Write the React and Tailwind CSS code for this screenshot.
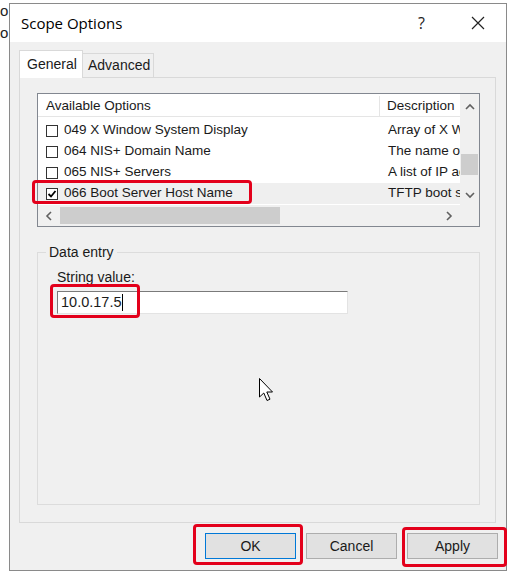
import React from 'react';

const rows = [
  { code: '049 X Window System Display', desc: 'Array of X Window System display managers', checked: false },
  { code: '064 NIS+ Domain Name', desc: 'The name of the client\'s NIS+ domain', checked: false },
  { code: '065 NIS+ Servers', desc: 'A list of IP addresses indicating NIS+ servers', checked: false },
  { code: '066 Boot Server Host Name', desc: 'TFTP boot server host name', checked: true },
];

function Checkbox({ checked }) {
  return (
    <div className="w-[12px] h-[12px] border border-[#333] bg-white flex items-center justify-center shrink-0">
      {checked && (
        <svg width="10" height="10" viewBox="0 0 10 10">
          <path d="M1.5 5 L4 7.5 L8.5 2" fill="none" stroke="#000" strokeWidth="1.8" />
        </svg>
      )}
    </div>
  );
}

function Chevron({ dir }) {
  const d = {
    up: 'M1 6 L5 2 L9 6',
    down: 'M1 2 L5 6 L9 2',
    left: 'M6 1 L2 5 L6 9',
    right: 'M2 1 L6 5 L2 9',
  }[dir];
  const vertical = dir === 'up' || dir === 'down';
  return (
    <svg width={vertical ? 10 : 8} height={vertical ? 8 : 10} viewBox={vertical ? '0 0 10 8' : '0 0 8 10'}>
      <path d={d} fill="none" stroke="#606060" strokeWidth="1.6" />
    </svg>
  );
}

function Button({ label, primary }) {
  return (
    <div
      className={`w-[91px] h-[26px] flex items-center justify-center bg-[#e1e1e1] text-[14px] text-[#1a1a1a] ${
        primary ? 'border border-[#0078d7]' : 'border border-[#adadad]'
      }`}
    >
      {label}
    </div>
  );
}

export default function App() {
  return (
    <div className="relative w-[524px] h-[580px] bg-white overflow-hidden flex font-['Liberation_Sans',Arial,sans-serif] text-[#1a1a1a]">
      {/* window behind, mostly hidden */}
      <div className="w-[9px] overflow-hidden shrink-0 text-[15px] leading-[22px] text-[#222]">
        <div className="w-[9px] overflow-hidden whitespace-nowrap">o</div>
        <div className="w-[9px] overflow-hidden whitespace-nowrap">o</div>
      </div>

      {/* dialog */}
      <div className="mt-[3px] w-[498px] h-[568px] border border-[#8a8a8a] bg-[#f0f0f0] flex flex-col shrink-0">
        {/* title bar */}
        <div className="h-[38px] bg-white flex items-center pl-[11px] shrink-0">
          <span className="text-[15px] font-['Open_Sans',sans-serif] text-[#000]">Scope Options</span>
          <span className="ml-auto text-[16px] font-['Open_Sans',sans-serif] text-[#222] mr-[46px]">?</span>
          <svg width="14" height="14" viewBox="0 0 14 14" className="mr-[21px]">
            <path d="M1 1 L13 13 M13 1 L1 13" stroke="#222" strokeWidth="1.2" />
          </svg>
        </div>

        {/* body */}
        <div className="flex flex-col pl-[9px] pr-[10px] pt-[8px]">
          {/* tabs */}
          <div className="flex items-end h-[28px] relative z-10 -mb-[1px]">
            <div className="w-[64px] h-[28px] bg-white border border-[#d9d9d9] border-b-0 flex items-center pl-[7px] text-[14px]">
              General
            </div>
            <div className="w-[71px] h-[25px] bg-[#f0f0f0] border border-[#d9d9d9] border-l-0 flex items-center pl-[5px] text-[14px]">
              Advanced
            </div>
          </div>

          {/* panel */}
          <div className="h-[446px] border border-[#d9d9d9] bg-[#f0f0f0] flex flex-col pl-[17px] pr-[15px] pt-[15px]">
            {/* list view */}
            <div className="w-[443px] h-[134px] border border-[#828790] bg-white flex flex-col shrink-0">
              <div className="flex h-[111px]">
                <div className="flex-1 flex flex-col overflow-hidden">
                  <div className="flex h-[23px] border-b border-[#e5e5e5] text-[13.5px] shrink-0 pt-[2px]">
                    <div className="w-[342px] border-r border-[#e5e5e5] pl-[8px] flex items-center">Available Options</div>
                    <div className="flex-1 min-w-0 pl-[7px] flex items-center whitespace-nowrap overflow-hidden">Description</div>
                  </div>
                  <div className="flex flex-col pt-[3px]">
                    {rows.map((r) => (
                      <div
                        key={r.code}
                        className={`flex h-[21px] items-center text-[13.5px] whitespace-nowrap ${r.checked ? 'bg-[#efefef]' : ''}`}
                      >
                        <div className="w-[342px] flex items-center pl-[8px] gap-[6px] shrink-0">
                          <Checkbox checked={r.checked} />
                          <span>{r.code}</span>
                        </div>
                        <div className="flex-1 min-w-0 pl-[8px] overflow-hidden">{r.desc}</div>
                      </div>
                    ))}
                  </div>
                </div>
                {/* vertical scrollbar */}
                <div className="w-[19px] bg-[#f0f0f0] flex flex-col items-center shrink-0">
                  <div className="h-[22px] flex items-center justify-center pt-[4px]">
                    <Chevron dir="up" />
                  </div>
                  <div className="h-[38px]" />
                  <div className="w-[17px] h-[21px] bg-[#cdcdcd]" />
                  <div className="flex-1 flex items-end pb-[6px]">
                    <Chevron dir="down" />
                  </div>
                </div>
              </div>
              {/* horizontal scrollbar */}
              <div className="flex h-[21px] shrink-0">
                <div className="flex-1 bg-[#f0f0f0] flex items-center">
                  <div className="w-[22px] flex items-center justify-center">
                    <Chevron dir="left" />
                  </div>
                  <div className="w-[220px] h-[17px] bg-[#cdcdcd]" />
                  <div className="flex-1" />
                  <div className="w-[22px] flex items-center justify-center">
                    <Chevron dir="right" />
                  </div>
                </div>
                <div className="w-[19px] bg-[#f0f0f0]" />
              </div>
            </div>

            {/* group box */}
            <div className="mt-[25px] w-[443px] h-[253px] border border-[#dcdcdc] relative flex flex-col pl-[19px]">
              <span className="absolute -top-[10px] left-[8px] bg-[#f0f0f0] px-[3px] text-[14px] leading-[18px]">Data entry</span>
              <div className="mt-[15px] text-[14px] leading-[18px]">String value:</div>
              <div className="mt-[5px] w-[291px] h-[23px] bg-white border border-[#7a7a7a] border-b-[#e3e3e3] border-r-[#e3e3e3] flex items-center pl-[3px] text-[14.5px]">
                <span>10.0.17.5</span>
                <span className="w-[1px] h-[17px] bg-black ml-[1px]" />
              </div>
              <div className="flex-1 flex items-start justify-center pt-[64px] pl-[0px] pr-[2px]">
                <svg width="16" height="24" viewBox="0 0 16 24">
                  <path
                    d="M0.5 0.5 L0.5 19 L4.8 15 L8 22.5 L11 21.2 L7.8 14 L13.5 14 Z"
                    fill="#fff"
                    stroke="#000"
                    strokeWidth="1"
                    strokeLinejoin="miter"
                  />
                </svg>
              </div>
            </div>
          </div>

          {/* buttons */}
          <div className="flex justify-end gap-[10px] mt-[10px] -mr-[2px]">
            <Button label="OK" primary />
            <Button label="Cancel" />
            <Button label="Apply" />
          </div>
        </div>
      </div>

      {/* red highlights */}
      <div className="absolute left-[32px] top-[180px] w-[220px] h-[24px] border-[3px] border-[#e3001b] rounded-[4px]" />
      <div className="absolute left-[50px] top-[284px] w-[90px] h-[34px] border-[3px] border-[#e3001b] rounded-[4px]" />
      <div className="absolute left-[193px] top-[524px] w-[110px] h-[41px] border-[3px] border-[#e3001b] rounded-[4px]" />
      <div className="absolute left-[402px] top-[527px] w-[105px] h-[40px] border-[3px] border-[#e3001b] rounded-[4px]" />
    </div>
  );
}
